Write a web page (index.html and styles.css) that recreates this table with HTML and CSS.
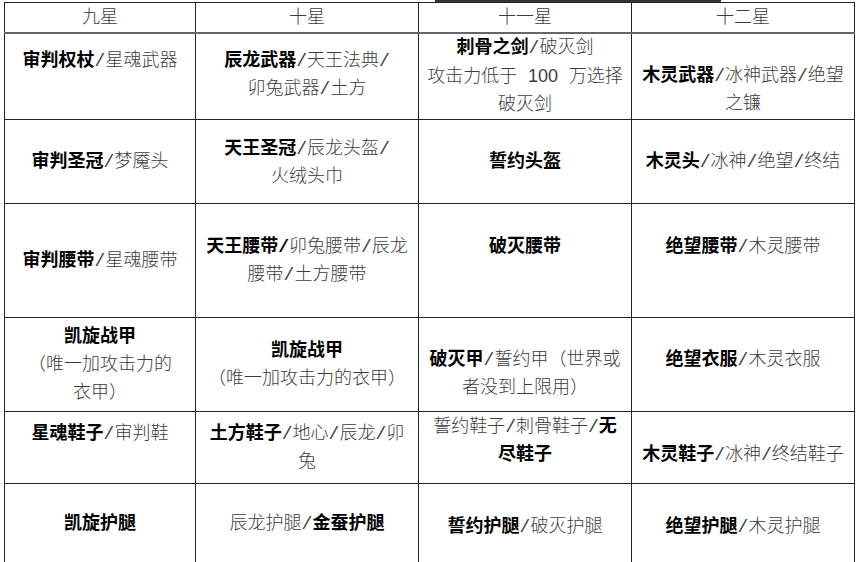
FILE: index.html
```html
<!DOCTYPE html>
<html lang="zh-CN">
<head>
<meta charset="utf-8">
<title>装备表</title>
<link rel="stylesheet" href="styles.css">
</head>
<body>
<div class="topline"></div>
<table class="gear">
  <colgroup>
    <col class="c1"><col class="c2"><col class="c3"><col class="c4">
  </colgroup>
  <thead>
    <tr class="head">
      <th>九星</th><th>十星</th><th>十一星</th><th>十二星</th>
    </tr>
  </thead>
  <tbody>
    <tr class="r1">
      <td class="pt-13"><b>审判权杖</b>/星魂武器</td>
      <td class="pt-13"><b>辰龙武器</b>/天王法典/<br>卯兔武器/土方</td>
      <td class="pt-0"><b>刺骨之剑</b>/破灭剑<br>攻击力低于 <span class="num">100</span> 万选择<br>破灭剑</td>
      <td class="pt-28"><b>木灵武器</b>/冰神武器/绝望<br>之镰</td>
    </tr>
    <tr class="r2">
      <td class="pt-28"><b>审判圣冠</b>/梦魇头</td>
      <td class="pt-15"><b>天王圣冠</b>/辰龙头盔/<br>火绒头巾</td>
      <td class="pt-28"><b>誓约头盔</b></td>
      <td class="pt-28"><b>木灵头</b>/冰神/绝望/终结</td>
    </tr>
    <tr class="r3">
      <td class="pt-43"><b>审判腰带</b>/星魂腰带</td>
      <td class="pt-29"><b>天王腰带/</b>卯兔腰带/辰龙<br>腰带/土方腰带</td>
      <td class="pt-29"><b>破灭腰带</b></td>
      <td class="pt-29"><b>绝望腰带</b>/木灵腰带</td>
    </tr>
    <tr class="r4">
      <td class="pt-5"><b>凯旋战甲</b><br>（唯一加攻击力的<br>衣甲）</td>
      <td class="pt-19"><b>凯旋战甲</b><br>（唯一加攻击力的衣甲）</td>
      <td class="pt-28"><b>破灭甲</b>/誓约甲（世界或<br>者没到上限用）</td>
      <td class="pt-28"><b>绝望衣服</b>/木灵衣服</td>
    </tr>
    <tr class="r5">
      <td class="pt-8"><b>星魂鞋子</b>/审判鞋</td>
      <td class="pt-8"><b>土方鞋子</b>/地心/辰龙/卯<br>兔</td>
      <td class="pt-1">誓约鞋子/刺骨鞋子/<b>无<br>尽鞋子</b></td>
      <td class="pt-29"><b>木灵鞋子</b>/冰神/终结鞋子</td>
    </tr>
    <tr class="r6">
      <td class="pt-26"><b>凯旋护腿</b></td>
      <td class="pt-26">辰龙护腿/<b>金蚕护腿</b></td>
      <td class="pt-29"><b>誓约护腿</b>/破灭护腿</td>
      <td class="pt-29"><b>绝望护腿</b>/木灵护腿</td>
    </tr>
  </tbody>
</table>
</body>
</html>
```

FILE: styles.css
```css
html, body {
  margin: 0;
  padding: 0;
  background: #ffffff;
}

.topline {
  margin-left: 435px;
  width: 286px;
  height: 2px;
  background: #333333;
}

.gear {
  margin-left: 4px;
  border-collapse: collapse;
  table-layout: fixed;
  width: 851px;
  font-family: "Liberation Mono", "Noto Sans CJK SC", sans-serif;
  font-size: 18px;
  line-height: 28px;
  color: #3c3c3c;
  font-weight: 300;
}

.c1 { width: 191px; }
.c2 { width: 223px; }
.c3 { width: 213px; }
.c4 { width: 223px; }

.gear th,
.gear td {
  border: 1px solid #222222;
  text-align: center;
  padding: 0;
  white-space: nowrap;
}

.gear th {
  font-weight: 300;
  vertical-align: middle;
  height: 29px;
  border-bottom: 2px solid #666666;
}

.gear td {
  vertical-align: top;
}

.gear b {
  font-weight: 700;
  color: #000000;
}

.num {
  font-family: "Liberation Sans", sans-serif;
}

.r1 { height: 83px; }
.r2 { height: 84px; }
.r3 { height: 114px; }
.r4 { height: 94px; }
.r5 { height: 72px; }
.r6 { height: 85px; }

.gear td.pt-0 { padding-top: 0; }
.gear td.pt-1 { padding-top: 1px; }
.gear td.pt-5 { padding-top: 5px; }
.gear td.pt-8 { padding-top: 8px; }
.gear td.pt-13 { padding-top: 13px; }
.gear td.pt-15 { padding-top: 15px; }
.gear td.pt-19 { padding-top: 19px; }
.gear td.pt-26 { padding-top: 26px; }
.gear td.pt-28 { padding-top: 28px; }
.gear td.pt-29 { padding-top: 29px; }
.gear td.pt-43 { padding-top: 43px; }
```
